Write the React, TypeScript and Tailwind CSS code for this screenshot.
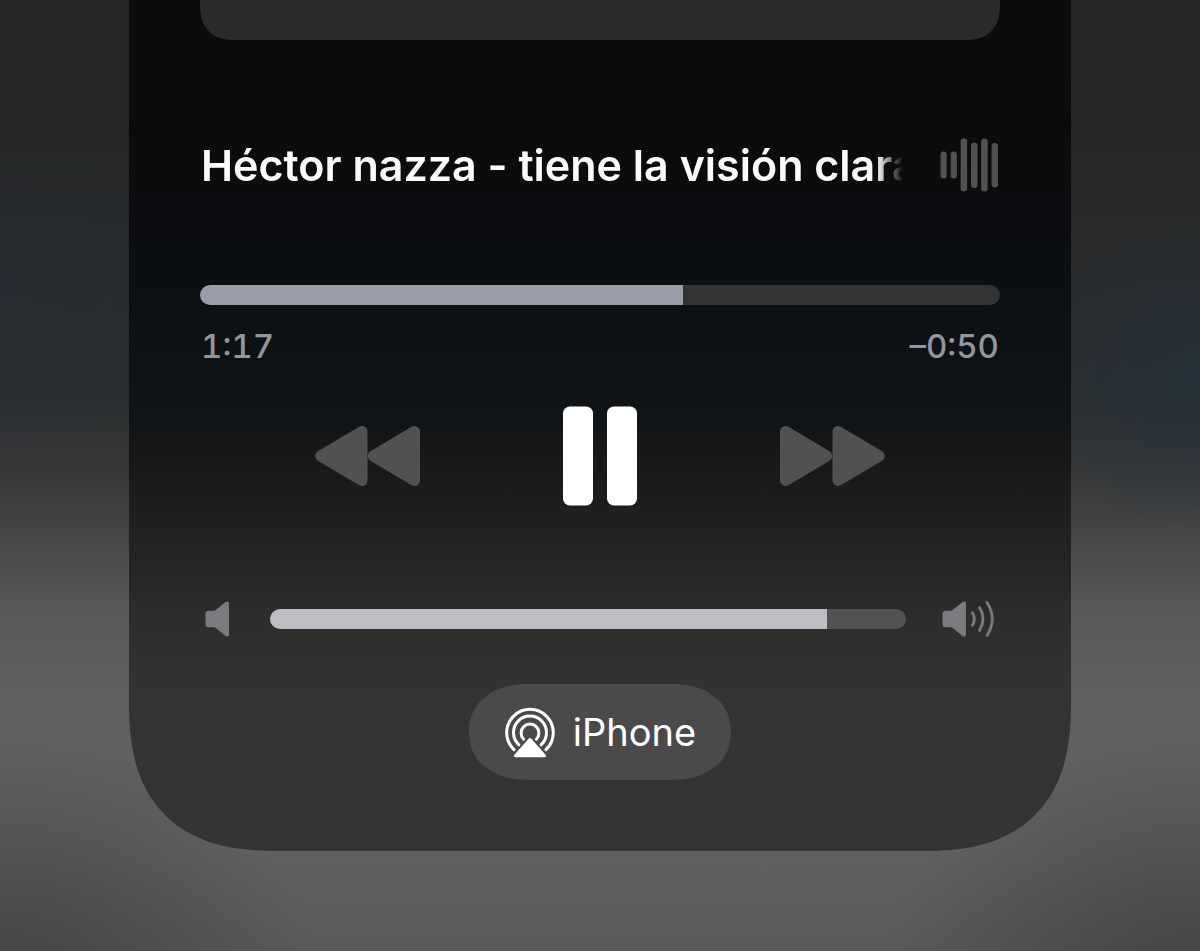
import { useState } from "react";

const WaveIcon = () => (
  <svg
    className="h-14 w-[60px] shrink-0 text-[#505152]"
    viewBox="0 0 60 56"
    fill="currentColor"
    aria-hidden="true"
  >
    <rect x="0.5" y="14.5" width="6.2" height="27" rx="3" />
    <rect x="10.7" y="14.5" width="6.2" height="27" rx="3" />
    <rect x="20.6" y="1.5" width="6.5" height="53" rx="3" />
    <rect x="31" y="5.5" width="6.5" height="45.5" rx="3" />
    <rect x="41.2" y="1.5" width="6.5" height="53" rx="3" />
    <rect x="51.6" y="6" width="6.4" height="44.5" rx="3" />
  </svg>
);

const ForwardIcon = ({ className = "" }: { className?: string }) => (
  <svg
    className={`h-[60px] w-[105px] text-[#4f5153] ${className}`}
    viewBox="0 0 105 60"
    fill="currentColor"
    stroke="currentColor"
    strokeWidth="11"
    strokeLinejoin="round"
    aria-hidden="true"
  >
    <path d="M5.5 5.5L46.8 30L5.5 54.5Z" />
    <path d="M58 5.5L99.3 30L58 54.5Z" />
  </svg>
);

const PauseIcon = () => (
  <svg
    className="h-[100px] w-[74px] text-white"
    viewBox="0 0 74 100"
    fill="currentColor"
    aria-hidden="true"
  >
    <rect x="0" y="0.5" width="30" height="99" rx="7" />
    <rect x="44" y="0.5" width="30" height="99" rx="7" />
  </svg>
);

const speaker =
  "M3.5 10.8H8.5Q10 10.8 11 9.8L20.5 2C22 .8 24 1.4 24 3.4V34.6C24 36.6 22 37.2 20.5 36L11 28.2Q10 27.2 8.5 27.2H3.5C1.5 27.2 .5 26.2 .5 24.2V13.8C.5 11.8 1.5 10.8 3.5 10.8Z";

const SpeakerLow = () => (
  <svg
    className="h-[38px] w-[26px] shrink-0 text-[#7b7a7e]"
    viewBox="0 0 26 38"
    fill="currentColor"
    aria-hidden="true"
  >
    <path d={speaker} />
  </svg>
);

const SpeakerHigh = () => (
  <svg
    className="h-[38px] w-[54px] shrink-0 text-[#7b7a7e]"
    viewBox="0 0 54 38"
    fill="currentColor"
    aria-hidden="true"
  >
    <path d={speaker} />
    <g fill="none" stroke="currentColor" strokeWidth="2.8" strokeLinecap="round">
      <path d="M30.5 12.6Q34.1 19 30.5 25.4" />
      <path d="M37.5 7.6Q44.5 19 37.5 30.4" />
      <path d="M45 2.6Q55.6 19 45 35.4" />
    </g>
  </svg>
);

const AirPlayIcon = () => (
  <svg
    className="h-[52px] w-[50px] shrink-0"
    viewBox="0 -2 50 52"
    fill="none"
    aria-hidden="true"
  >
    <g stroke="currentColor" strokeWidth="3" strokeLinecap="round">
      <path d="M9 41.6A23.3 23.3 0 1 1 41 41.6" />
      <path d="M13.9 36.8A16.5 16.5 0 1 1 36.1 36.8" />
      <path d="M18.6 31.2A8.9 8.9 0 1 1 31.4 31.2" />
    </g>
    <path
      d="M23.4 30.9C24.4 29.8 25.6 29.8 26.6 30.9L40.6 46.8C41.6 48 41 49.2 39.6 49.2H10.4C9 49.2 8.4 48 9.4 46.8Z"
      fill="currentColor"
    />
  </svg>
);

type SliderProps = {
  label: string;
  value: number;
  onChange: (value: number) => void;
  fill: string;
  track: string;
};

const Slider = ({ label, value, onChange, fill, track }: SliderProps) => (
  <input
    type="range"
    aria-label={label}
    min={0}
    max={100}
    step={0.1}
    value={value}
    onChange={(e) => onChange(Number(e.target.value))}
    className="block h-5 w-full min-w-0 cursor-pointer appearance-none rounded-full [&::-webkit-slider-thumb]:h-5 [&::-webkit-slider-thumb]:w-0 [&::-webkit-slider-thumb]:appearance-none"
    style={{
      background: `linear-gradient(to right, ${fill} ${value}%, ${track} ${value}%)`,
    }}
  />
);

const Player = () => {
  const [progress, setProgress] = useState(60.4);
  const [volume, setVolume] = useState(87.5);

  return (
    <section className="mx-auto w-full max-w-[942px] rounded-b-[150px] bg-[linear-gradient(to_bottom,#0c0c0c_0px,#0b0b0c_130px,#0b0d10_220px,#0b1014_300px,#0e1316_390px,#141618_440px,#1d1d1e_500px,#262525_560px,#2e2d2d_620px,#333333_690px,#343434_851px)] px-[71px] pb-[71px] [corner-shape:superellipse(1.34)]">
      <div className="h-10 rounded-b-[36px] bg-[#2b2b2b] [corner-shape:superellipse(1.3)]" />

      <div className="mt-[97px] flex items-center gap-[35px]">
        <h1 className="min-w-0 flex-1 overflow-hidden pl-px text-[43px] leading-14 font-semibold whitespace-nowrap text-[#fbfbfd] [mask-image:linear-gradient(to_right,#000_calc(100%-28px),transparent_calc(100%-2px))]">
          Héctor nazza - tiene la visión clara
        </h1>
        <WaveIcon />
      </div>

      <div className="mt-[92px]">
        <Slider
          label="Playback position"
          value={progress}
          onChange={setProgress}
          fill="#989da8"
          track="#313335"
        />
        <div className="mt-[21px] flex justify-between px-px text-[33px] leading-10 font-medium text-[#94969c] tabular-nums">
          <span>1:17</span>
          <span>–0:50</span>
        </div>
      </div>

      <div className="mt-10 flex items-center justify-between px-[115px]">
        <button type="button" aria-label="Rewind">
          <ForwardIcon className="rotate-180" />
        </button>
        <button type="button" aria-label="Pause">
          <PauseIcon />
        </button>
        <button type="button" aria-label="Fast forward">
          <ForwardIcon />
        </button>
      </div>

      <div className="mt-[94px] flex items-center pr-1 pl-[5px]">
        <SpeakerLow />
        <div className="mr-9 ml-[39px] min-w-0 flex-1">
          <Slider
            label="Volume"
            value={volume}
            onChange={setVolume}
            fill="#bfbdc4"
            track="#525253"
          />
        </div>
        <SpeakerHigh />
      </div>

      <button
        type="button"
        className="mx-auto mt-[46px] flex h-24 items-center gap-[18px] rounded-[60px/48px] bg-[#4a4a4a] pr-[35px] pl-9 text-[38px] text-white [corner-shape:superellipse(1.15)]"
      >
        <AirPlayIcon />
        iPhone
      </button>
    </section>
  );
};

export default function App() {
  return (
    <main className="min-h-screen bg-[radial-gradient(ellipse_180px_150px_at_100%_380px,#22334099,transparent),radial-gradient(ellipse_200px_150px_at_0px_290px,#232e3866,transparent),radial-gradient(ellipse_320px_240px_at_0px_980px,#3e3e3ecc,transparent),radial-gradient(ellipse_320px_240px_at_100%_980px,#3e3e3ecc,transparent),linear-gradient(to_bottom,#272727_0px,#262727_140px,#292b2d_260px,#2c2f31_400px,#363738_470px,#484848_540px,#585858_610px,#606060_690px,#606060_860px,#5a5a5a_951px)] pb-[100px] font-['Inter','Liberation_Sans',sans-serif]">
      <Player />
    </main>
  );
}
